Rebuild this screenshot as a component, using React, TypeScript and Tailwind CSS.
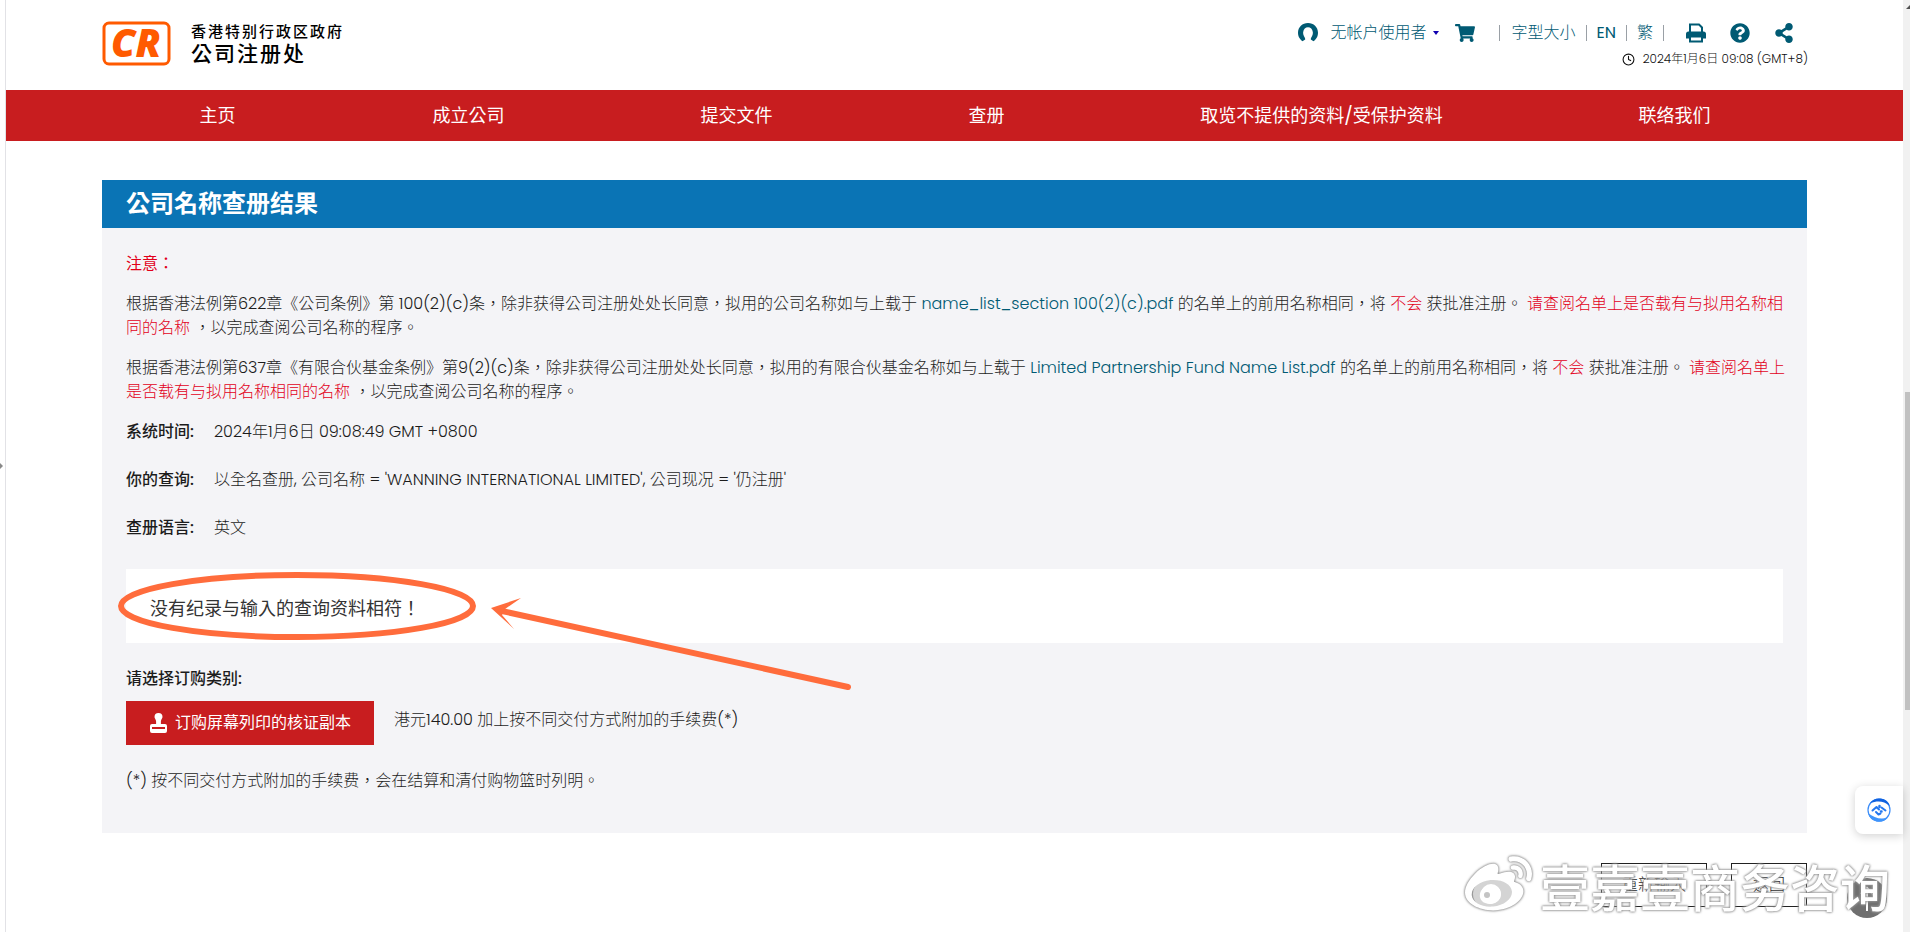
import React from "react";
import { FaShoppingCart, FaQuestionCircle, FaShareAlt, FaWeibo } from "react-icons/fa";
import { FiClock } from "react-icons/fi";

const navItems = [
  { label: "主页", className: "w-[226px]" },
  { label: "成立公司", className: "w-[276px]" },
  { label: "提交文件", className: "w-[260px]" },
  { label: "查册", className: "w-[240px]" },
  { label: "取览不提供的资料/受保护资料", className: "w-[430px]" },
  { label: "联络我们", className: "w-[276px]" },
];

function Divider() {
  return <span className="h-4 w-px bg-[#9aa0a6]" />;
}

function Header() {
  return (
    <header className="flex h-[90px] items-start justify-between pr-[95px] pl-24">
      <a href="#home" className="flex items-center pt-[21px] text-black">
        <svg width="70" height="46" viewBox="0 0 70 46" aria-label="CR" className="mr-[19px] overflow-visible">
          <rect x="2" y="2" width="65" height="41" rx="5" fill="#fff" stroke="#ff5a00" strokeWidth="3" />
          <text x="34" y="36" textAnchor="middle" fontFamily="Open Sans, sans-serif" fontWeight="800" fontStyle="italic" fontSize="39" fill="#ff5a00">CR</text>
        </svg>
        <span className="flex flex-col">
          <span className="text-[15px] leading-5 font-medium tracking-[2px]">香港特别行政区政府</span>
          <span className="text-[21px] leading-6 font-medium tracking-[2px]">公司注册处</span>
        </span>
      </a>
      <div className="flex flex-col items-end pt-[19px]">
        <div className="flex h-7 items-center pr-3.5 font-light text-[#005a73]">
          <svg width="20" height="20" viewBox="0 0 20 20" className="mr-3" fill="#005a73">
            <path d="M3.200 17.200A9.900 9.900 0 0 1 0 9.800C0 4 4.400 0 10 0s10 4 10 9.800a9.900 9.900 0 0 1-3.200 7.400l-1.300 1-2.700-1.600c-.1-1.200.5-2.200 1.200-3.400.8-1.400 1-2.600.8-4.200C14.400 6.200 12.600 4.200 10 4.200S5.600 6.200 5.200 9c-.2 1.600 0 2.800.8 4.200.7 1.200 1.300 2.200 1.200 3.400l-2.700 1.600z" />
          </svg>
          <button type="button" className="flex items-center gap-1.5">
            无帐户使用者
            <span className="border-x-[3px] border-t-4 border-x-transparent border-t-[#1000b0]" />
          </button>
          <FaShoppingCart size={20} className="mr-6 ml-4" />
          <Divider />
          <button type="button" className="ml-3 mr-2.5">字型大小</button>
          <Divider />
          <a href="#en" className="mx-2.5 font-normal">EN</a>
          <Divider />
          <a href="#tc" className="mx-2.5">繁</a>
          <Divider />
          <svg width="20" height="20" viewBox="0 0 20 20" className="mr-6 ml-[22px]" fill="none" stroke="#005a73" strokeWidth="2">
            <path d="M4 9V1.500h9l3 3V9" />
            <path d="M0 15.500V11q0-2.500 2.500-2.500h15Q20 8.500 20 11v4.500h-3.500V13h-13v2.500z" fill="#005a73" stroke="none" />
            <path d="M4 13.500h12V18.500H4z" fill="#fff" />
          </svg>
          <FaQuestionCircle size={20} className="mr-6" />
          <FaShareAlt size={20} />
        </div>
        <div className="flex items-center gap-2 text-xs leading-6 font-light text-[#111]">
          <FiClock size={13} />
          2024年1月6日 09:08 (GMT+8)
        </div>
      </div>
    </header>
  );
}

function Warn({ children }: { children: React.ReactNode }) {
  return <span className="text-[#e2001a]">{children}</span>;
}

function FileLink({ children }: { children: React.ReactNode }) {
  return <a href="#file" className="text-[#005a73]">{children}</a>;
}

function Row({ label, children }: { label: string; children: React.ReactNode }) {
  return (
    <div className="mb-6 flex gap-5">
      <dt className="font-medium">{label}</dt>
      <dd>{children}</dd>
    </div>
  );
}

export default function App() {
  return (
    <div className="flex min-h-screen bg-white font-['Poppins','Inter','Noto_Sans_CJK_TC',sans-serif] text-base text-[#1c1c1c]">
      <div className="flex w-1.5 shrink-0 items-center border-r border-[#e2e2e6] bg-white">
        <span className="border-y-[3px] border-l-[3px] border-y-transparent border-l-[#888]" />
      </div>
      <div className="min-w-0 flex-1">
        <Header />
        <nav className="flex h-[51px] items-center justify-center bg-[#c81d1f] pl-2 text-lg font-normal text-white">
          {navItems.map((n) => (
            <a key={n.label} href="#nav" className={`${n.className} text-center`}>{n.label}</a>
          ))}
        </nav>
        <main className="mt-[39px] pr-24 pl-24">
          <h1 className="flex h-12 items-center bg-[#0a74b5] pl-6 text-2xl font-bold text-white">公司名称查册结果</h1>
          <section className="bg-[#f4f4f7] pt-6 pr-6 pb-10 pl-6 leading-6 font-light">
            <h2 className="mb-4 font-normal text-[#e2001a]">注意：</h2>
            <div className="-mr-1">
              <p className="mb-4">
                根据香港法例第622章《公司条例》第 100(2)(c)条，除非获得公司注册处处长同意，拟用的公司名称如与上载于 <FileLink>name_list_section 100(2)(c).pdf</FileLink> 的名单上的前用名称相同，将 <Warn>不会</Warn> 获批准注册。 <Warn>请查阅名单上是否载有与拟用名称相同的名称</Warn> ，以完成查阅公司名称的程序。
              </p>
              <p className="mb-4">
                根据香港法例第637章《有限合伙基金条例》第9(2)(c)条，除非获得公司注册处处长同意，拟用的有限合伙基金名称如与上载于 <FileLink>Limited Partnership Fund Name List.pdf</FileLink> 的名单上的前用名称相同，将 <Warn>不会</Warn> 获批准注册。 <Warn>请查阅名单上是否载有与拟用名称相同的名称</Warn> ，以完成查阅公司名称的程序。
              </p>
            </div>
            <dl>
              <Row label="系统时间:">2024年1月6日 09:08:49 GMT +0800</Row>
              <Row label="你的查询:">以全名查册, 公司名称 = 'WANNING INTERNATIONAL LIMITED', 公司现况 = '仍注册'</Row>
              <Row label="查册语言:">英文</Row>
            </dl>
            <div className="relative mt-[29px] flex h-[74px] items-center bg-white pt-1.5 pl-6 text-lg font-normal text-[#333]">
              没有纪录与输入的查询资料相符！
              <svg className="pointer-events-none absolute -top-2.5 -left-2.5" width="740" height="140" viewBox="0 0 740 140" fill="none" stroke="#ff6c3c">
                <ellipse cx="181" cy="47" rx="176" ry="31" strokeWidth="6" />
                <path d="M386 52 732 128" strokeWidth="6" strokeLinecap="round" />
                <path d="M375 49 405 39 389 50 386 56 398 70z" fill="#ff6c3c" stroke="none" />
              </svg>
            </div>
            <p className="mt-6 mb-2.5 font-medium">请选择订购类别:</p>
            <div className="flex items-start gap-5">
              <button type="button" className="flex h-11 items-center gap-2 bg-[#c81d1f] pr-[23px] pl-6 font-normal text-white">
                <svg width="17" height="20" viewBox="0 0 17 20" fill="#fff">
                  <path d="M8.500 0a4 4 0 0 1 4 4c0 1.600-1.600 2.600-1.600 4.400V11H15q2 0 2 2v5q0 2-2 2H2q-2 0-2-2v-5q0-2 2-2h4.100V8.400C6.100 6.600 4.500 5.600 4.500 4a4 4 0 0 1 4-4zM2 14v2h13v-2z" fillRule="evenodd" />
                </svg>
                订购屏幕列印的核证副本
              </button>
              <span className="pt-[7px]">港元140.00 加上按不同交付方式附加的手续费(*)</span>
            </div>
            <p className="mt-6">(*) 按不同交付方式附加的手续费，会在结算和清付购物篮时列明。</p>
          </section>
          <div className="mt-[30px] flex justify-end gap-6 font-light">
            <button type="button" className="h-11 border border-[#222] px-5">重新输入</button>
            <button type="button" className="h-11 border border-[#222] px-[21px]">返回</button>
          </div>
        </main>
      </div>
      <div className="flex w-[7px] shrink-0 flex-col items-end bg-[#f1f1f1]">
        <span className="mt-[5px] h-0 w-1 border-b-4 border-l-4 border-b-[#505050] border-l-transparent" />
        <div className="mt-[383px] h-[318px] w-[5px] bg-[#c1c1c1]" />
      </div>
      <button type="button" aria-label="Assistant" className="absolute top-[786px] right-[7px] flex h-12 w-12 items-center justify-center rounded-l-lg bg-white shadow-[0_2px_10px_rgba(0,0,0,0.18)]">
        <svg width="24" height="24" viewBox="0 0 24 24">
          <circle cx="12" cy="12" r="11" fill="#fff" stroke="#3b8cf8" strokeWidth="1.200" />
          <path d="M3 5A11.500 11.500 0 0 1 23 8C16 2 10 3 3 5z" fill="#1062e0" />
          <path d="M1 15A11.500 11.500 0 0 0 21 19.500C14 22 7 20 1 15z" fill="#3f94fb" />
          <path d="M5.500 12.500 9.500 9l2.500 2.500M14.500 9.500l4 3M9 14l2.500 2.500 2-1" stroke="#2478f0" strokeWidth="2" fill="none" strokeLinecap="round" strokeLinejoin="round" />
          <path d="M12.500 8v1M14 13.500h.5" stroke="#2478f0" strokeWidth="2.500" strokeLinecap="round" />
        </svg>
      </button>
      <div className="absolute top-[878px] right-[23px] flex h-10 w-10 items-center justify-center rounded-full bg-[#6f6f6f]">
        <svg width="16" height="28" viewBox="0 0 16 28" fill="none" stroke="#fff" strokeWidth="2"><path d="M8 27V4M2 10l6-6 6 6" /></svg>
      </div>
      <div className="pointer-events-none absolute top-[850px] right-5 flex items-center gap-2 font-['Noto_Sans_CJK_SC',sans-serif] text-[50px] leading-[70px] font-medium text-white [filter:drop-shadow(0_0_1px_#888)_drop-shadow(0_0_1px_#aaa)]">
        <span className="relative">
          <span className="absolute top-7 left-2 h-7 w-10 rounded-full bg-[#d4d4d4]" />
          <FaWeibo size={67} className="relative" />
          <span className="absolute top-8 left-4 h-5 w-5 rounded-full bg-white" />
          <span className="absolute top-10 left-[19px] h-1.5 w-1.5 rounded-full bg-[#c4c4c4]" />
        </span>
        壹嘉壹商务咨询
      </div>
    </div>
  );
}
